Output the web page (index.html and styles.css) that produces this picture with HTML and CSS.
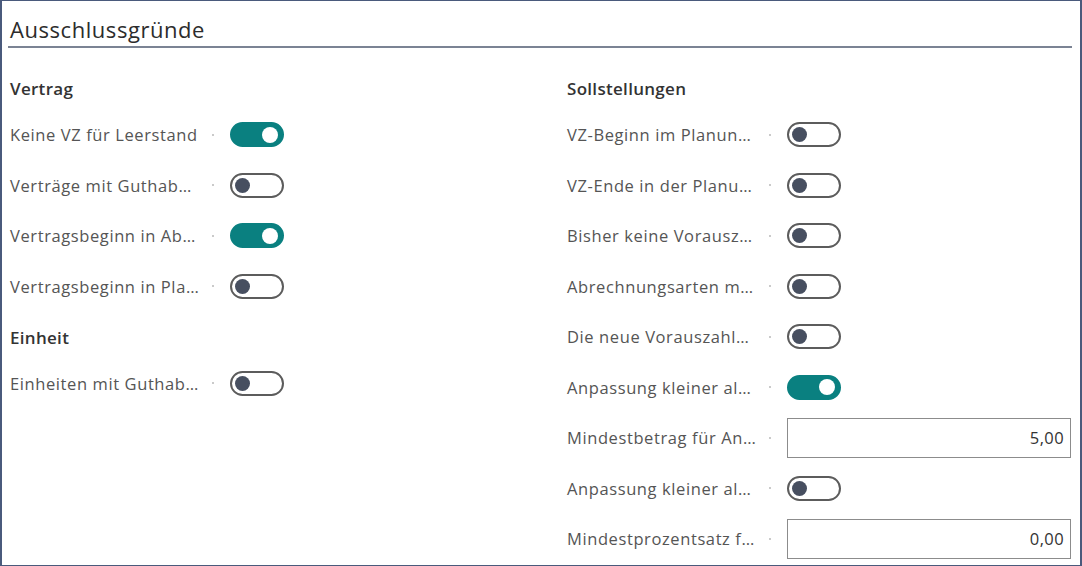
FILE: index.html
```html
<!DOCTYPE html>
<html lang="de">
<head>
<meta charset="utf-8">
<title>Ausschlussgründe</title>
<link rel="stylesheet" href="styles.css">
</head>
<body>
<div class="frame">
  <div class="header">Ausschlussgründe</div>
  <div class="columns">
    <div class="col">
      <div class="group">Vertrag</div>
      <div class="row"><span class="label"><span class="text">Keine VZ für Leerstand</span></span><span class="toggle on"></span></div>
      <div class="row"><span class="label"><span class="text">Verträge mit Guthab…</span></span><span class="toggle"></span></div>
      <div class="row"><span class="label"><span class="text">Vertragsbeginn in Ab…</span></span><span class="toggle on"></span></div>
      <div class="row"><span class="label"><span class="text">Vertragsbeginn in Pla…</span></span><span class="toggle"></span></div>
      <div class="group next">Einheit</div>
      <div class="row"><span class="label"><span class="text">Einheiten mit Guthab…</span></span><span class="toggle"></span></div>
    </div>
    <div class="col">
      <div class="group">Sollstellungen</div>
      <div class="row"><span class="label"><span class="text">VZ-Beginn im Planun…</span></span><span class="toggle"></span></div>
      <div class="row"><span class="label"><span class="text">VZ-Ende in der Planu…</span></span><span class="toggle"></span></div>
      <div class="row"><span class="label"><span class="text">Bisher keine Vorausz…</span></span><span class="toggle"></span></div>
      <div class="row"><span class="label"><span class="text">Abrechnungsarten m…</span></span><span class="toggle"></span></div>
      <div class="row"><span class="label"><span class="text">Die neue Vorauszahl…</span></span><span class="toggle"></span></div>
      <div class="row"><span class="label"><span class="text">Anpassung kleiner al…</span></span><span class="toggle on"></span></div>
      <div class="row"><span class="label"><span class="text">Mindestbetrag für An…</span></span><span class="input">5,00</span></div>
      <div class="row"><span class="label"><span class="text">Anpassung kleiner al…</span></span><span class="toggle"></span></div>
      <div class="row"><span class="label"><span class="text">Mindestprozentsatz f…</span></span><span class="input">0,00</span></div>
    </div>
  </div>
</div>
</body>
</html>
```
FILE: styles.css
```css
html, body {
  margin: 0;
  padding: 0;
  background: #ffffff;
}
body {
  font-family: "Open Sans", "Noto Sans", "Liberation Sans", sans-serif;
  color: #505050;
}
.frame {
  box-sizing: border-box;
  width: 1082px;
  height: 566px;
  border: 1px solid #4a5a7c;
  border-left-width: 2px;
  border-right-width: 2px;
  overflow: hidden;
}
.header {
  margin: 0 8px 0 6px;
  padding: 14px 2px 3px;
  font-size: 22px;
  line-height: 28px;
  letter-spacing: 0.55px;
  color: #2c2c2c;
  border-bottom: 2px solid #7b8394;
}
.columns {
  display: grid;
  grid-template-columns: 557px 1fr;
  padding-left: 8px;
  margin-top: 20px;
}
.group {
  height: 41.5px;
  display: flex;
  align-items: center;
  font-size: 17px;
  font-weight: 600;
  letter-spacing: 0.3px;
  color: #333333;
}
.group.next {
  margin-top: 5px;
}
.row {
  height: 50.5px;
  display: flex;
  align-items: center;
}
.label {
  width: 220px;
  display: flex;
  align-items: center;
  font-size: 16.5px;
  letter-spacing: 0.6px;
  color: #555555;
}
.text {
  width: 196px;
  white-space: nowrap;
}
.label::after {
  content: "";
  width: 2px;
  height: 2px;
  border-radius: 50%;
  background: #b8b8b8;
  margin-left: 6px;
}
.toggle {
  box-sizing: border-box;
  width: 54px;
  height: 25px;
  border-radius: 13px;
  border: 2px solid #5c5c5c;
  display: flex;
  align-items: center;
  padding: 0 3px;
}
.toggle::before {
  content: "";
  width: 15px;
  height: 15px;
  border-radius: 50%;
  background: #474f60;
}
.toggle.on {
  background: #0a8080;
  border-color: #0a8080;
  justify-content: flex-end;
  padding: 0 4px;
}
.toggle.on::before {
  background: #ffffff;
  width: 16px;
  height: 16px;
}
.input {
  box-sizing: border-box;
  width: 284px;
  height: 40px;
  border: 1px solid #8c8c8c;
  display: flex;
  align-items: center;
  justify-content: flex-end;
  padding-right: 6px;
  font-size: 16.5px;
  letter-spacing: 0.4px;
  color: #333333;
}
```
